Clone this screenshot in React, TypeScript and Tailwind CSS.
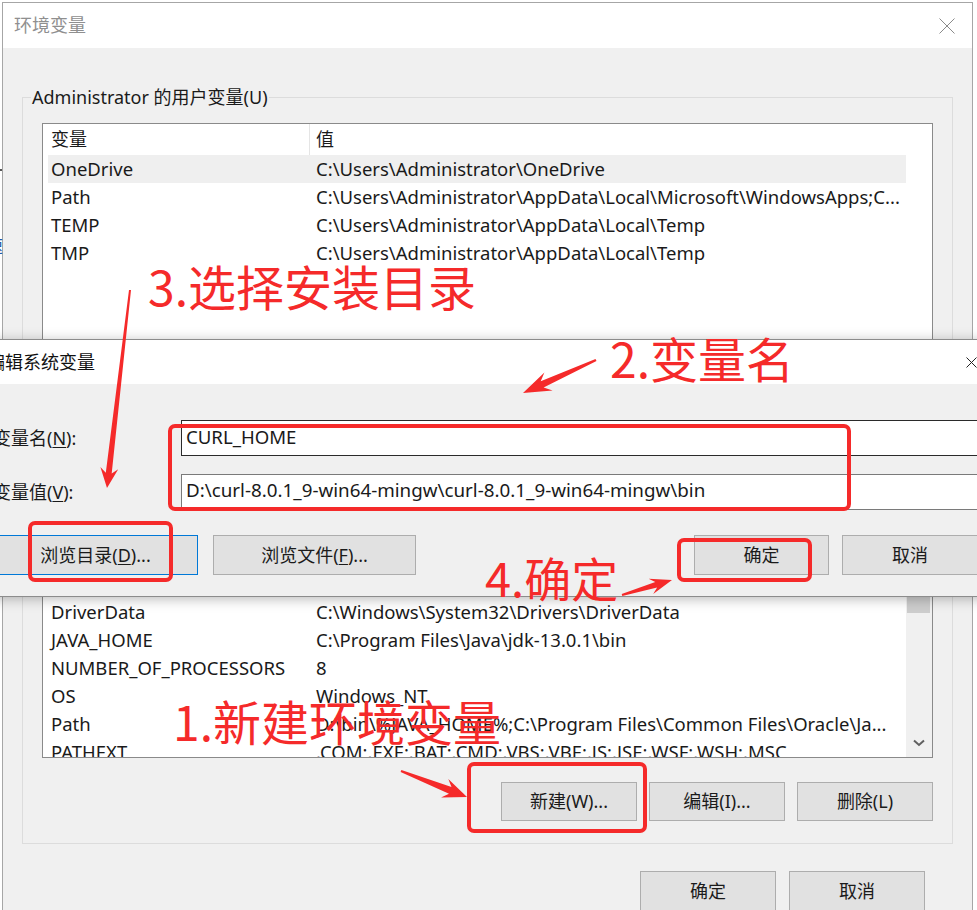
import React from 'react';

const RED = '#f52a2a';

type Row = { name: string; value: string; selected?: boolean };

const userVars: Row[] = [
  { name: 'OneDrive', value: 'C:\\Users\\Administrator\\OneDrive', selected: true },
  { name: 'Path', value: 'C:\\Users\\Administrator\\AppData\\Local\\Microsoft\\WindowsApps;C...' },
  { name: 'TEMP', value: 'C:\\Users\\Administrator\\AppData\\Local\\Temp' },
  { name: 'TMP', value: 'C:\\Users\\Administrator\\AppData\\Local\\Temp' },
];

const systemVars: Row[] = [
  { name: 'ComSpec', value: 'C:\\Windows\\system32\\cmd.exe' },
  { name: 'DriverData', value: 'C:\\Windows\\System32\\Drivers\\DriverData' },
  { name: 'JAVA_HOME', value: 'C:\\Program Files\\Java\\jdk-13.0.1\\bin' },
  { name: 'NUMBER_OF_PROCESSORS', value: '8' },
  { name: 'OS', value: 'Windows_NT' },
  { name: 'Path', value: 'D:\\bin\\%JAVA_HOME%;C:\\Program Files\\Common Files\\Oracle\\Ja...' },
  { name: 'PATHEXT', value: '.COM;.EXE;.BAT;.CMD;.VBS;.VBE;.JS;.JSE;.WSF;.WSH;.MSC' },
  { name: 'PROCESSOR_ARCHITECTURE', value: 'AMD64' },
];

// tapered annotation arrow, tail -> tip
function arrow(x1: number, y1: number, x2: number, y2: number, hl: number, hw: number, tw: number, nw: number) {
  const dx = x2 - x1;
  const dy = y2 - y1;
  const len = Math.hypot(dx, dy);
  const ux = dx / len;
  const uy = dy / len;
  const nx = -uy;
  const ny = ux;
  const bx = x2 - ux * hl;
  const by = y2 - uy * hl;
  const kx = x2 - ux * hl * 0.75;
  const ky = y2 - uy * hl * 0.75;
  const pts = [
    [x1 + nx * tw, y1 + ny * tw],
    [kx + nx * nw, ky + ny * nw],
    [bx + nx * hw, by + ny * hw],
    [x2, y2],
    [bx - nx * hw, by - ny * hw],
    [kx - nx * nw, ky - ny * nw],
    [x1 - nx * tw, y1 - ny * tw],
  ];
  return pts.map((p) => p.map((v) => v.toFixed(1)).join(',')).join(' ');
}

function Btn({ label, className = '' }: { label: React.ReactNode; className?: string }) {
  return (
    <div
      className={`flex items-center justify-center border bg-[#e1e1e1] text-[18px] text-[#1b1b1b] ${className}`}
    >
      {label}
    </div>
  );
}

function ListView({ rows, height, scrollbar }: { rows: Row[]; height: string; scrollbar?: boolean }) {
  return (
    <div className={`flex overflow-hidden border border-[#8a8a8a] bg-white ${height}`}>
      <div className="min-w-0 flex-1 overflow-hidden pl-[5px]">
        <div className="flex h-[31px] items-center">
          <div className="flex h-full w-[262px] items-center border-r border-[#e5e5e5] pl-[3px]">变量</div>
          <div className="pl-[6px]">值</div>
        </div>
        {rows.map((r) => (
          <div
            key={r.name}
            className={`flex h-[28px] items-center whitespace-nowrap text-[18.5px] ${r.selected ? 'bg-[#efefef]' : ''}`}
          >
            <div className="w-[262px] shrink-0 pl-[3px]">{r.name}</div>
            <div className="pl-[6px]">{r.value}</div>
          </div>
        ))}
      </div>
      {scrollbar ? (
        <div className="flex w-[26px] flex-col bg-[#f0f0f0]">
          <div className="h-[17px]" />
          <div className="ml-[1px] h-[57px] w-[23px] bg-[#cdcdcd]" />
          <div className="flex-1" />
          <div className="flex h-[28px] items-center justify-center">
            <svg width="12" height="8" viewBox="0 0 12 8">
              <path d="M1 1.5 L6 6 L11 1.5" fill="none" stroke="#606060" strokeWidth="2" />
            </svg>
          </div>
        </div>
      ) : (
        <div className="w-[26px]" />
      )}
    </div>
  );
}

export default function App() {
  return (
    <div className="relative h-[910px] w-[977px] overflow-hidden bg-white font-['Noto_Sans','Noto_Sans_CJK_SC',sans-serif] text-[18px] text-[#1a1a1a]">
      {/* bits of the desktop behind */}
      <span className="absolute left-[-15px] top-[233px] text-[18px] text-[#1e5aa8]">速</span>
      <span className="absolute left-0 top-[169px] h-[2px] w-[2px] bg-[#555]" />

      {/* 环境变量 window */}
      <div className="ml-[2px] mt-[2px] w-[971px] border border-[#a6a6a6] bg-[#f0f0f0]">
        <div className="flex h-[45px] items-center justify-between bg-white pl-[11px] pr-[17px]">
          <span className="text-[#8f8f8f]">环境变量</span>
          <svg width="16" height="16" viewBox="0 0 16 16">
            <path d="M0.5 0.5 L15.5 15.5 M15.5 0.5 L0.5 15.5" stroke="#8a8a8a" strokeWidth="1" />
          </svg>
        </div>

        <div className="px-[19px] pb-[20px] pt-[49px]">
          <div className="border border-[#dcdcdc] px-[19px] pb-[22px]">
            <div className="-ml-[11px] -mt-[13px] w-fit bg-[#f0f0f0] px-[1px] leading-[24px]">
              Administrator 的用户变量(U)
            </div>
            <div className="mt-[14px]">
              <ListView rows={userVars} height="h-[277px]" />
            </div>
            <div className="mt-[24px] flex justify-end gap-[12px]">
              <Btn label="新建(U)..." className="h-[39px] w-[136px] border-[#adadad]" />
              <Btn label="编辑(E)..." className="h-[39px] w-[136px] border-[#adadad]" />
              <Btn label="删除(D)" className="h-[39px] w-[136px] border-[#adadad]" />
            </div>
          </div>

          <div className="mt-[26px] border border-[#dcdcdc] px-[19px] pb-[22px]">
            <div className="-ml-[11px] -mt-[13px] w-fit bg-[#f0f0f0] px-[1px] leading-[24px]">系统变量(S)</div>
            <div className="mt-[14px]">
              <ListView rows={systemVars} height="h-[220px]" scrollbar />
            </div>
            <div className="mt-[24px] flex justify-end gap-[12px]">
              <Btn label="新建(W)..." className="h-[39px] w-[136px] border-[#adadad]" />
              <Btn label="编辑(I)..." className="h-[39px] w-[136px] border-[#adadad]" />
              <Btn label="删除(L)" className="h-[39px] w-[136px] border-[#adadad]" />
            </div>
          </div>

          <div className="mt-[27px] flex justify-end gap-[13px] pr-[28px]">
            <Btn label="确定" className="h-[40px] w-[136px] border-[#adadad]" />
            <Btn label="取消" className="h-[40px] w-[136px] border-[#adadad]" />
          </div>
        </div>
      </div>

      {/* 编辑系统变量 dialog, on top */}
      <div className="absolute left-[-22px] top-[339px] w-[1022px] border border-[#8c8c8c] shadow-[0_2px_12px_rgba(0,0,0,0.28)]">
        <div className="flex h-[44px] items-center justify-between bg-white pl-[8px] pr-[22px]">
          <span className="text-[#111]">编辑系统变量</span>
          <svg width="11" height="11" viewBox="0 0 11 11">
            <path d="M0.5 0.5 L10.5 10.5 M10.5 0.5 L0.5 10.5" stroke="#222" strokeWidth="1" />
          </svg>
        </div>
        <div className="bg-[#f0f0f0] pb-[21px] pl-[14px] pr-[21px] pt-[36px]">
          <div className="flex h-[36px] items-center">
            <div className="w-[188px] shrink-0">
              变量名(<span className="underline underline-offset-2">N</span>):
            </div>
            <div className="flex h-full flex-1 items-center border border-[#2a2a2a] bg-white pb-[3px] pl-[4px] text-[18.6px]">
              CURL_HOME
            </div>
          </div>
          <div className="mt-[18px] flex h-[36px] items-center">
            <div className="w-[188px] shrink-0">
              变量值(<span className="underline underline-offset-2">V</span>):
            </div>
            <div className="flex h-full flex-1 items-center whitespace-nowrap border border-[#7a7a7a] bg-white pb-[3px] pl-[4px] text-[18.8px]">
              D:\curl-8.0.1_9-win64-mingw\curl-8.0.1_9-win64-mingw\bin
            </div>
          </div>
          <div className="mt-[25px] flex h-[40px]">
            <Btn
              label={
                <>
                  浏览目录(<span className="underline underline-offset-2">D</span>)...
                </>
              }
              className="h-full w-[205px] border-[#0078d7]"
            />
            <Btn
              label={
                <>
                  浏览文件(<span className="underline underline-offset-2">F</span>)...
                </>
              }
              className="ml-[15px] h-full w-[203px] border-[#adadad]"
            />
            <div className="flex-1" />
            <Btn label="确定" className="h-full w-[135px] border-[#adadad]" />
            <Btn label="取消" className="ml-[13px] h-full w-[136px] border-[#adadad]" />
          </div>
        </div>
      </div>

      {/* red annotations */}
      <svg className="pointer-events-none absolute left-0 top-0" width="977" height="910" viewBox="0 0 977 910">
        <g fill="none" stroke={RED} strokeWidth="4">
          <rect x="170" y="426" width="679" height="83" rx="5" />
          <rect x="30" y="523" width="141" height="57" rx="5" />
          <rect x="679" y="540" width="131" height="40" rx="5" />
          <rect x="469" y="764" width="176" height="67" rx="5" />
        </g>
        <g fill={RED}>
          <polygon points={arrow(130, 290, 107, 488, 20, 9, 1, 3)} />
          <polygon points={arrow(596, 360, 523, 393, 28, 10, 1.2, 3.5)} />
          <polygon points={arrow(622, 595, 672, 580, 22, 8, 1, 3)} />
          <polygon points={arrow(401, 771, 467, 797, 24, 10, 1, 3.5)} />
        </g>
      </svg>
      <span className="absolute left-[148px] top-[261px] font-['Noto_Sans_CJK_SC',sans-serif] text-[48px] leading-none text-[#f52a2a]">
        3.选择安装目录
      </span>
      <span className="absolute left-[610px] top-[333px] font-['Noto_Sans_CJK_SC',sans-serif] text-[48px] leading-none text-[#f52a2a]">
        2.变量名
      </span>
      <span className="absolute left-[485px] top-[553px] font-['Noto_Sans_CJK_SC',sans-serif] text-[47px] leading-none text-[#f52a2a]">
        4.确定
      </span>
      <span className="absolute left-[173px] top-[696px] font-['Noto_Sans_CJK_SC',sans-serif] text-[48px] leading-none text-[#f52a2a]">
        1.新建环境变量
      </span>
    </div>
  );
}
